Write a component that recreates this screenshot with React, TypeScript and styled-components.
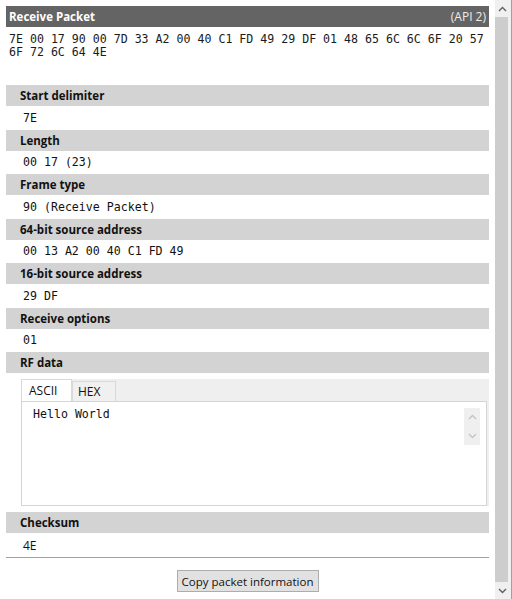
import React from 'react'
import styled, { createGlobalStyle } from 'styled-components'

const GlobalStyle = createGlobalStyle`
  html, body {
    margin: 0;
    padding: 0;
    background: #ffffff;
  }
  body {
    font-family: 'Open Sans', 'Noto Sans', sans-serif;
    overflow: hidden;
  }
`

const sections = [
  { title: 'Start delimiter', value: '7E' },
  { title: 'Length', value: '00 17 (23)' },
  { title: 'Frame type', value: '90 (Receive Packet)' },
  { title: '64-bit source address', value: '00 13 A2 00 40 C1 FD 49' },
  { title: '16-bit source address', value: '29 DF' },
  { title: 'Receive options', value: '01' },
]

const rawLines = [
  '7E 00 17 90 00 7D 33 A2 00 40 C1 FD 49 29 DF 01 48 65 6C 6C 6F 20 57',
  '6F 72 6C 64 4E',
]

const Chevron = ({ up, color }: { up?: boolean; color: string }) => (
  <svg width="9" height="6" viewBox="0 0 9 6">
    <path
      d={up ? 'M1 5 L4.5 1.5 L8 5' : 'M1 1 L4.5 4.5 L8 1'}
      fill="none"
      stroke={color}
      strokeWidth="1.4"
    />
  </svg>
)

export default function App() {
  return (
    <Window>
      <GlobalStyle />
      <Content>
        <TitleBar>
          <TitleText>Receive Packet</TitleText>
          <ApiText>(API 2)</ApiText>
        </TitleBar>
        <RawBlock>
          {rawLines.map((line) => (
            <div key={line}>{line}</div>
          ))}
        </RawBlock>

        {sections.map((s) => (
          <React.Fragment key={s.title}>
            <SectionBar>{s.title}</SectionBar>
            <ValueRow>{s.value}</ValueRow>
          </React.Fragment>
        ))}

        <SectionBar>RF data</SectionBar>
        <TabPanel>
          <TabStrip>
            <Tab active>ASCII</Tab>
            <Tab>HEX</Tab>
          </TabStrip>
          <TextBox>
            Hello World
            <MiniScroll>
              <Chevron up color="#c4c4c4" />
              <Chevron color="#c4c4c4" />
            </MiniScroll>
          </TextBox>
        </TabPanel>

        <SectionBar spaced>Checksum</SectionBar>
        <ValueRow last>4E</ValueRow>

        <Footer>
          <CopyButton>Copy packet information</CopyButton>
        </Footer>
      </Content>

      <ScrollBar>
        <ArrowBox>
          <Chevron up color="#606060" />
        </ArrowBox>
        <Thumb />
        <ArrowBox>
          <Chevron color="#606060" />
        </ArrowBox>
      </ScrollBar>
    </Window>
  )
}

const Window = styled.div`
  display: flex;
  width: 512px;
  height: 599px;
  background: #ffffff;
`

const Content = styled.div`
  flex: 1;
  display: flex;
  flex-direction: column;
  padding: 6px 6px 0 6px;
  min-width: 0;
`

const TitleBar = styled.div`
  height: 21px;
  background: #646464;
  display: flex;
  align-items: center;
  justify-content: space-between;
  padding: 0 3px;
`

const TitleText = styled.span`
  color: #ffffff;
  font-weight: 700;
  font-size: 11.5px;
`

const ApiText = styled.span`
  color: #ececec;
  font-size: 12px;
`

const RawBlock = styled.div`
  font-family: 'DejaVu Sans Mono', 'Liberation Mono', monospace;
  font-size: 11.6px;
  line-height: 13px;
  color: #1a1a1a;
  padding: 6px 3px 0 3px;
  height: 52px;
`

interface SectionBarProps {
  spaced?: boolean
}

const SectionBar = styled.div<SectionBarProps>`
  height: 21px;
  background: #d3d3d3;
  display: flex;
  align-items: center;
  padding-left: 14px;
  font-weight: 700;
  font-size: 11.5px;
  color: #111111;
  margin-top: ${({ spaced }) => (spaced ? '6px' : '0')};
`

interface ValueRowProps {
  last?: boolean
}

const ValueRow = styled.div<ValueRowProps>`
  height: ${({ last }) => (last ? '24px' : '23.5px')};
  display: flex;
  align-items: center;
  padding-left: 17px;
  font-family: ${({ last }) =>
    last
      ? "'Open Sans', 'Noto Sans', sans-serif"
      : "'DejaVu Sans Mono', 'Liberation Mono', monospace"};
  font-size: ${({ last }) => (last ? '12px' : '11.6px')};
  color: #111111;
  border-bottom: ${({ last }) => (last ? '1px solid #a0a0a0' : 'none')};
`

const TabPanel = styled.div`
  margin: 6px 0 0 15px;
  background: #efefef;
  display: flex;
  flex-direction: column;
`

const TabStrip = styled.div`
  display: flex;
  align-items: flex-end;
  height: 22px;
`

interface TabProps {
  active?: boolean
}

const Tab = styled.div<TabProps>`
  height: ${({ active }) => (active ? '22px' : '20px')};
  box-sizing: border-box;
  padding: 0 ${({ active }) => (active ? '7px' : '5px')};
  min-width: ${({ active }) => (active ? '51px' : '44px')};
  background: ${({ active }) => (active ? '#ffffff' : '#f0f0f0')};
  border: 1px solid #d9d9d9;
  border-bottom: none;
  font-size: 12px;
  color: #111111;
  display: flex;
  align-items: center;
`

const TextBox = styled.div`
  position: relative;
  height: 105px;
  box-sizing: border-box;
  margin-right: 2px;
  background: #ffffff;
  border: 1px solid #d5d5d5;
  padding: 5px 11px;
  font-family: 'DejaVu Sans Mono', 'Liberation Mono', monospace;
  font-size: 11.6px;
  color: #111111;
`

const MiniScroll = styled.div`
  position: absolute;
  top: 6px;
  right: 6px;
  width: 16px;
  height: 37px;
  background: #efefef;
  display: flex;
  flex-direction: column;
  align-items: center;
  justify-content: space-around;
`

const Footer = styled.div`
  display: flex;
  justify-content: center;
  padding-top: 12px;
`

const CopyButton = styled.button`
  height: 22px;
  width: 142px;
  background: #e1e1e1;
  border: 1px solid #adadad;
  font-family: 'Open Sans', 'Noto Sans', sans-serif;
  font-size: 11.5px;
  color: #111111;
  padding: 0;
`

const ScrollBar = styled.div`
  width: 17px;
  height: 599px;
  background: #f0f0f0;
  display: flex;
  flex-direction: column;
  border-right: 1px solid #a0a0a0;
  box-sizing: border-box;
`

const ArrowBox = styled.div`
  height: 17px;
  display: flex;
  align-items: center;
  justify-content: center;
  padding-right: 2px;
`

const Thumb = styled.div`
  flex: 1;
  width: 13px;
  background: #cdcdcd;
  margin: 0 3px 0 0;
`
